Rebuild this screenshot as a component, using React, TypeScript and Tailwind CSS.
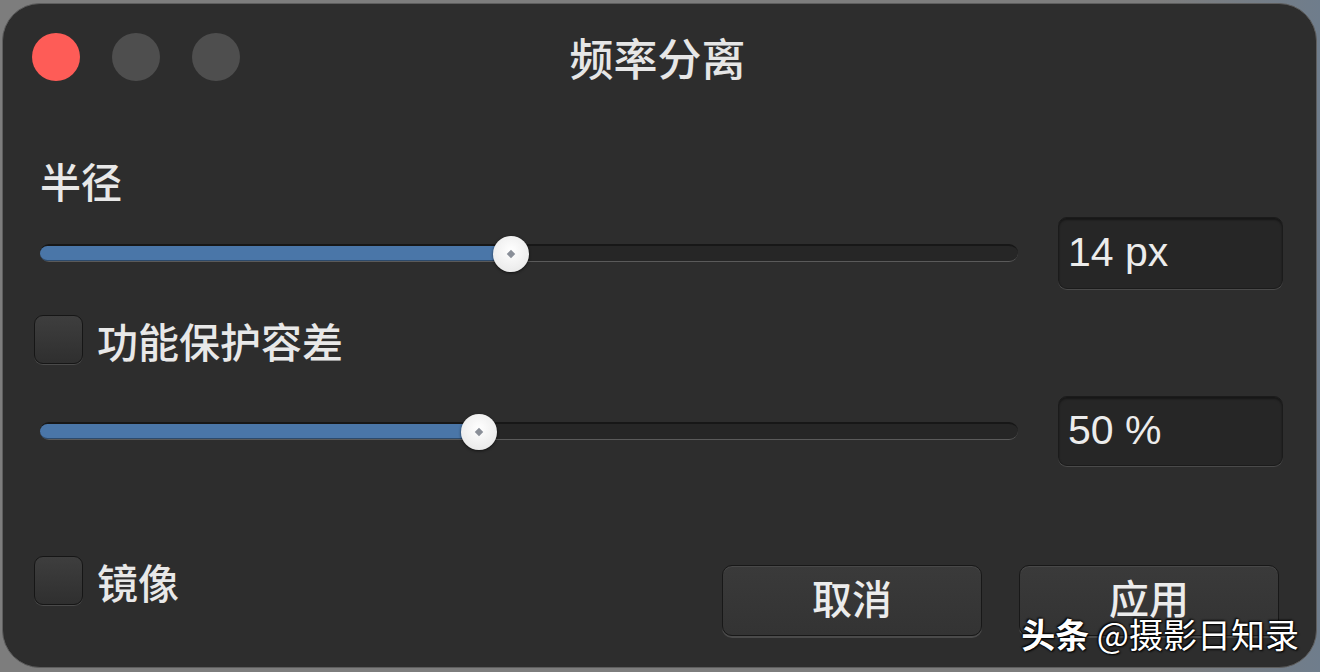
import React from "react";

const cjk = "font-['Noto_Sans_CJK_SC',sans-serif]";
const num = "font-['Liberation_Sans','Noto_Sans_CJK_SC',sans-serif]";

function Slider({ pct }: { pct: number }) {
  return (
    <div className="relative h-[18px] flex-1 rounded-full border-t-2 border-t-[#171717] border-b border-b-[#5a5a5a] bg-[#262626]">
      <div
        className="absolute left-0 top-0 h-full rounded-l-full bg-[#4a76a8] border-b border-b-[#2d4a6b]"
        style={{ width: `${pct}%` }}
      />
      <div
        className="absolute top-1/2 flex h-[36px] w-[36px] -translate-x-1/2 -translate-y-1/2 items-center justify-center rounded-full bg-[radial-gradient(circle_at_50%_40%,#ffffff,#e4e4e4)] shadow-[0_1px_3px_rgba(0,0,0,0.6)]"
        style={{ left: `${pct}%` }}
      >
        <div className="h-[6px] w-[6px] rotate-45 bg-[#8a8f98]" />
      </div>
    </div>
  );
}

function ValueBox({ text, h }: { text: string; h: string }) {
  return (
    <div
      className={`${h} w-[225px] flex items-center rounded-[9px] bg-[#262626] border border-[#1b1b1b] shadow-[0_1px_0_#4a4a4a,inset_0_2px_2px_rgba(0,0,0,0.4)] pl-[9px] ${num} text-[41px] text-[#ececec]`}
    >
      {text}
    </div>
  );
}

function Check() {
  return (
    <div className="h-[49px] w-[49px] shrink-0 rounded-[9px] border border-[#161616] bg-[linear-gradient(#3e3e3e,#2f2f2f)] shadow-[0_1px_0_#4a4a4a]" />
  );
}

function Button({ label }: { label: string }) {
  return (
    <div
      className={`h-[71px] w-[260px] flex items-center justify-center pb-[8px] rounded-[10px] border border-[#181818] bg-[linear-gradient(#3a3a3a,#333333)] shadow-[0_2px_0_#4a4a4a,inset_0_1px_0_#484848] ${cjk} text-[40px] font-medium text-[#ececec]`}
    >
      {label}
    </div>
  );
}

export default function App() {
  return (
    <div className="h-[672px] w-[1320px] bg-[linear-gradient(90deg,#7d7d7d_0%,#7d7d7d_88%,#6f7d8c_100%)] pl-[2px] pr-[3px] pt-[3px] pb-[4px]">
      <div className="relative flex h-full w-full flex-col rounded-[38px] border border-[#5e5e5e] bg-[#2d2d2d] overflow-hidden">
        {/* title bar */}
        <div className="mt-[29px] grid h-[48px] grid-cols-[1fr_auto_1fr] items-center">
          <div className="flex gap-[32px] pl-[29px]">
            <div className="h-[48px] w-[48px] rounded-full bg-[#fe5c57]" />
            <div className="h-[48px] w-[48px] rounded-full bg-[#4e4e4e]" />
            <div className="h-[48px] w-[48px] rounded-full bg-[#4e4e4e]" />
          </div>
          <div className={`${cjk} text-[44px] font-medium leading-[48px] text-[#e6e6e6] -ml-[4px]`}>频率分离</div>
          <div />
        </div>

        {/* radius label */}
        <div className={`mt-[75px] pl-[37px] ${cjk} text-[41px] font-medium leading-[48px] text-[#e8e8e8]`}>半径</div>

        {/* slider 1 */}
        <div className="mt-[13px] flex items-center gap-[40px] pl-[37px] pr-[33px]">
          <Slider pct={48.2} />
          <ValueBox text="14 px" h="h-[72px]" />
        </div>

        {/* checkbox row */}
        <div className="mt-[26px] flex items-center gap-[14px] pl-[31px]">
          <Check />
          <div className={`${cjk} text-[41px] font-medium leading-[48px] text-[#e8e8e8]`}>功能保护容差</div>
        </div>

        {/* slider 2 */}
        <div className="mt-[32px] flex items-center gap-[40px] pl-[37px] pr-[33px]">
          <Slider pct={44.9} />
          <ValueBox text="50 %" h="h-[70px]" />
        </div>

        {/* bottom row */}
        <div className="mt-[90px] flex items-start pl-[31px] pr-[37px]">
          <div className="flex items-center gap-[14px]">
            <Check />
            <div className={`${cjk} text-[41px] font-medium leading-[48px] text-[#e8e8e8]`}>镜像</div>
          </div>
          <div className="ml-auto mt-[9px] flex gap-[37px]">
            <Button label="取消" />
            <Button label="应用" />
          </div>
        </div>

        {/* watermark */}
        <div
          className={`absolute right-[17px] bottom-[13px] ${cjk} text-[34px] leading-[40px] text-white [text-shadow:0_0_2px_#000,1px_1px_2px_#000,-1px_-1px_2px_#000]`}
        >
          <span className="font-bold">头条</span> @摄影日知录
        </div>
      </div>
    </div>
  );
}
